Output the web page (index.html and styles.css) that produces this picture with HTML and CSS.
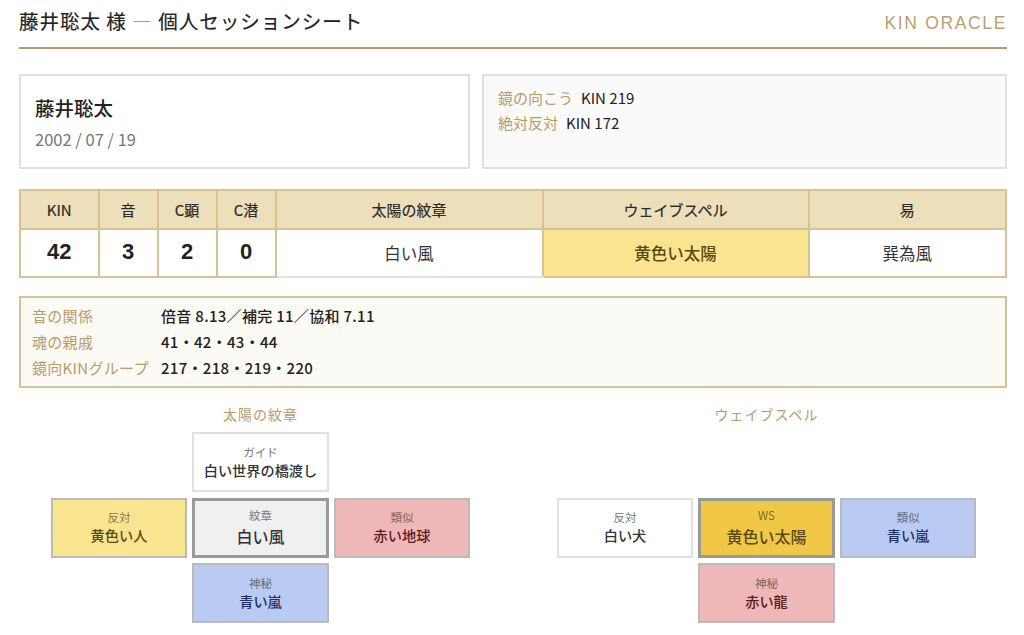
FILE: index.html
```html
<!DOCTYPE html>
<html lang="ja">
<head>
    <meta charset="UTF-8">
    <meta name="viewport" content="width=device-width, initial-scale=1.0">
    <title>個人セッションシート</title>
    <link rel="stylesheet" href="styles.css">
</head>
<body>
    <header class="sheet-header">
        <h1>藤井聡太 様 <span class="dash">—</span> 個人セッションシート</h1>
        <div class="brand">KIN ORACLE</div>
    </header>

    <section class="top-cards">
        <div class="card profile">
            <div class="name">藤井聡太</div>
            <div class="birth">2002 / 07 / 19</div>
        </div>
        <div class="card mirror">
            <div><span class="gold">鏡の向こう</span>KIN 219</div>
            <div><span class="gold">絶対反対</span>KIN 172</div>
        </div>
    </section>

    <table class="kin-table">
        <colgroup>
            <col class="c-kin"><col class="c-num"><col class="c-num"><col class="c-num">
            <col class="c-seal"><col class="c-wave"><col>
        </colgroup>
        <thead>
            <tr>
                <th>KIN</th><th>音</th><th>C顕</th><th>C潜</th>
                <th>太陽の紋章</th><th>ウェイブスペル</th><th>易</th>
            </tr>
        </thead>
        <tbody>
            <tr>
                <td class="num">42</td><td class="num">3</td><td class="num">2</td><td class="num">0</td>
                <td class="plain">白い風</td>
                <td class="yellow-cell">黄色い太陽</td>
                <td>巽為風</td>
            </tr>
        </tbody>
    </table>

    <section class="info">
        <div class="info-row"><span class="gold">音の関係</span><span>倍音 8.13／補完 11／協和 7.11</span></div>
        <div class="info-row"><span class="gold">魂の親戚</span><span>41・42・43・44</span></div>
        <div class="info-row"><span class="gold">鏡向KINグループ</span><span>217・218・219・220</span></div>
    </section>

    <section class="diagrams">
        <div class="diagram">
            <h2>太陽の紋章</h2>
            <div class="cross">
                <div class="box white top"><small>ガイド</small><b>白い世界の橋渡し</b></div>
                <div class="box yellow left"><small>反対</small><b>黄色い人</b></div>
                <div class="box center grey main"><small>紋章</small><b>白い風</b></div>
                <div class="box red right"><small>類似</small><b>赤い地球</b></div>
                <div class="box blue bottom"><small>神秘</small><b>青い嵐</b></div>
            </div>
        </div>
        <div class="diagram">
            <h2>ウェイブスペル</h2>
            <div class="cross">
                <div class="box white left"><small>反対</small><b>白い犬</b></div>
                <div class="box center gold-box main"><small>WS</small><b>黄色い太陽</b></div>
                <div class="box blue right"><small>類似</small><b>青い嵐</b></div>
                <div class="box red bottom"><small>神秘</small><b>赤い龍</b></div>
            </div>
        </div>
    </section>
</body>
</html>
```

FILE: styles.css
```css
/* Reset */
body, h1, h2 {
    margin: 0;
    padding: 0;
}

body {
    font-family: "Noto Sans CJK JP", "Noto Sans", sans-serif;
    background-color: #fff;
    color: #222;
    padding: 0 17px 0 19px;
    overflow: hidden;
}

.gold {
    color: #b89b68;
}

/* Header */
.sheet-header {
    display: flex;
    justify-content: space-between;
    align-items: center;
    height: 47px;
    border-bottom: 2px solid #b89b68;
}

.sheet-header h1 {
    font-size: 19.5px;
    font-weight: 400;
    letter-spacing: 1px;
    line-height: 44px;
    margin-top: -5px;
    -webkit-text-stroke: 0.2px #222;
}

.dash {
    color: #888;
    font-weight: 400;
    -webkit-text-stroke: 0;
}

.brand {
    font-family: "Liberation Sans", Arial, sans-serif;
    font-size: 17.5px;
    letter-spacing: 1.65px;
    color: #bb9f6f;
    margin-top: -1px;
}

/* Top cards */
.top-cards {
    display: grid;
    grid-template-columns: 451px 525px;
    gap: 12px;
    margin-top: 25px;
}

.card {
    height: 95px;
    box-sizing: border-box;
    border: 2px solid #e0e0e0;
}

.profile {
    padding: 18px 14px;
}

.name {
    font-size: 19.5px;
    font-weight: 500;
    line-height: 28px;
}

.birth {
    font-size: 16.5px;
    color: #777;
    line-height: 24px;
    margin-top: 5px;
}

.mirror {
    background-color: #fafafa;
    padding: 9px 14px;
    font-size: 15px;
    line-height: 25px;
}

.mirror .gold {
    margin-right: 8px;
}

/* KIN table */
.kin-table {
    width: 988px;
    margin-top: 20px;
    border-collapse: collapse;
    table-layout: fixed;
}

.c-kin { width: 78.5px; }
.c-num { width: 59px; }
.c-seal { width: 267px; }
.c-wave { width: 266px; }

.kin-table th, .kin-table td {
    border: 2px solid #d6c295;
    padding: 0;
    text-align: center;
}

.kin-table th {
    height: 37px;
    background-color: #ecdfba;
    font-size: 15px;
    font-weight: 400;
    color: #2a2a2a;
    -webkit-text-stroke: 0.2px #2a2a2a;
}

.kin-table td {
    height: 44px;
    font-size: 16.5px;
    color: #333;
}

.kin-table td.num {
    font-family: "Liberation Sans", Arial, sans-serif;
    font-size: 22px;
    font-weight: bold;
    color: #222;
    padding-bottom: 2px;
}

.kin-table td.plain {
    border-bottom-color: #e2e2e2;
}

.kin-table td.yellow-cell {
    background-color: #f9e48f;
    color: #5c4813;
    font-weight: 500;
}

/* Info box */
.info {
    margin-top: 18px;
    height: 92px;
    box-sizing: border-box;
    padding: 5px 11px;
    background-color: #fcfaf4;
    border: 2px solid #d6c295;
}

.info-row {
    display: flex;
    font-size: 15px;
    line-height: 26px;
    font-weight: 500;
    letter-spacing: 0.3px;
}

.info-row .gold {
    width: 129px;
    font-weight: 400;
}

/* Diagrams */
.diagrams {
    display: grid;
    grid-template-columns: 483px 481px;
    gap: 24px;
    margin-top: 16px;
}

.diagram h2 {
    font-size: 14px;
    font-weight: 400;
    letter-spacing: 1px;
    line-height: 20px;
    color: #b89b68;
    text-align: center;
}

.cross {
    display: grid;
    grid-template-columns: repeat(3, 136.5px);
    grid-template-rows: repeat(3, 60.3px);
    gap: 5.3px 5px;
    justify-content: center;
    margin-top: 8px;
}

.box {
    display: flex;
    flex-direction: column;
    align-items: center;
    justify-content: center;
    box-sizing: border-box;
    border: 2px solid #bbb;
    color: #333;
}

.box small {
    font-size: 11.5px;
    line-height: 16px;
    color: #777;
}

.box b {
    font-size: 14.2px;
    font-weight: 500;
    line-height: 21px;
}

.top { grid-area: 1 / 2; }
.left { grid-area: 2 / 1; }
.center { grid-area: 2 / 2; }
.right { grid-area: 2 / 3; }
.bottom { grid-area: 3 / 2; }

.white {
    background-color: #fff;
    border-color: #e0e0e0;
}

.yellow {
    background-color: #f9e48f;
    color: #5c4813;
}

.red {
    background-color: #eeb8b8;
    color: #5c1a1a;
}

.blue {
    background-color: #b9cbf3;
    color: #1f3263;
}

.grey {
    background-color: #f0f0f0;
}

.gold-box {
    background-color: #f0c846;
    color: #5c4813;
}

.main {
    border: 3px solid #9a9a9a;
    padding-bottom: 1px;
}

.main b {
    font-size: 16px;
    line-height: 24px;
    margin-top: 1px;
}

.yellow small, .red small, .blue small, .gold-box small {
    color: rgba(0, 0, 0, 0.5);
}
```
